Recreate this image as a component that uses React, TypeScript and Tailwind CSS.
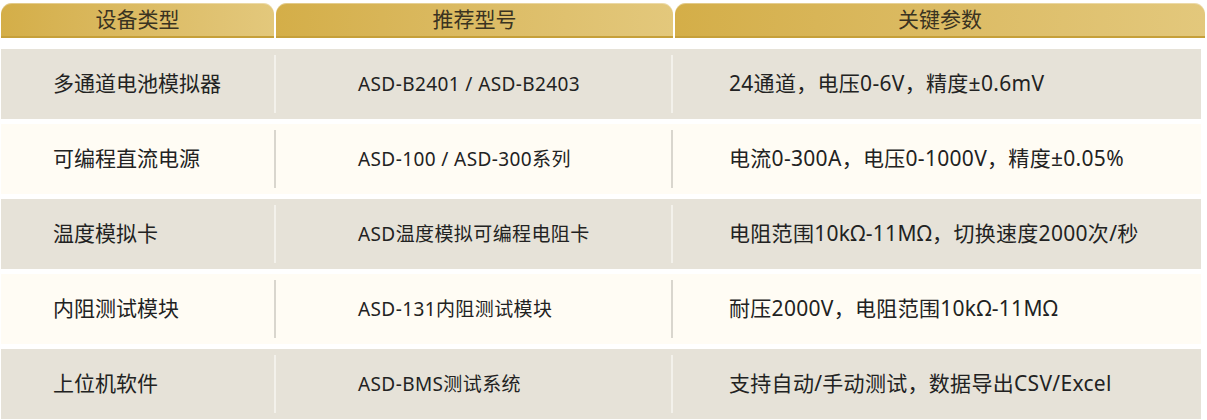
import React from 'react';

interface DeviceRow {
  type: string;
  model: string;
  params: string;
}

const rows: DeviceRow[] = [
  { type: '多通道电池模拟器', model: 'ASD-B2401 / ASD-B2403', params: '24通道，电压0-6V，精度±0.6mV' },
  { type: '可编程直流电源', model: 'ASD-100 / ASD-300系列', params: '电流0-300A，电压0-1000V，精度±0.05%' },
  { type: '温度模拟卡', model: 'ASD温度模拟可编程电阻卡', params: '电阻范围10kΩ-11MΩ，切换速度2000次/秒' },
  { type: '内阻测试模块', model: 'ASD-131内阻测试模块', params: '耐压2000V，电阻范围10kΩ-11MΩ' },
  { type: '上位机软件', model: 'ASD-BMS测试系统', params: '支持自动/手动测试，数据导出CSV/Excel' },
];

const headers = ['设备类型', '推荐型号', '关键参数'];

export default function App() {
  return (
    <div
      className="w-[1207px] h-[420px] bg-white pt-[3px] pl-[1px] overflow-hidden"
      style={{ fontFamily: '"Noto Sans", "Noto Sans CJK SC", sans-serif' }}
    >
      {/* header tabs */}
      <div className="grid grid-cols-[273px_397px_530px] gap-[2px]">
        {headers.map((h) => (
          <div
            key={h}
            className="h-[35px] rounded-t-[11px] bg-gradient-to-r from-[#d4ae48] to-[#e3c87c] border-b-2 border-[#c6a03a] shadow-[inset_0_1px_0_rgba(255,255,255,0.35)] flex items-center justify-center text-[21px] text-[#3a3321] leading-none"
          >
            {h}
          </div>
        ))}
      </div>

      {/* body rows */}
      <div className="mt-[11px] flex flex-col gap-[5px] w-[1200px]">
        {rows.map((r, i) => {
          const odd = i % 2 === 0;
          return (
            <div
              key={r.type}
              className={
                'h-[70px] grid grid-cols-[273px_397px_530px] items-center ' +
                (odd ? 'bg-[#e6e2d8]' : 'bg-[#fffcf4]')
              }
            >
              <div className="h-full flex items-center pl-[52px] text-[21px] text-[#222]">{r.type}</div>
              <div className="h-full flex items-stretch py-[6px]">
                <div className={'w-[2px] ' + (odd ? 'bg-[#f3f1eb]' : 'bg-[#d9d6ce]')} />
                <div className="flex-1 flex items-center pl-[82px] text-[19px] tracking-[0.4px] text-[#222]">
                  {r.model}
                </div>
              </div>
              <div className="h-full flex items-stretch py-[6px]">
                <div className={'w-[2px] ' + (odd ? 'bg-[#f3f1eb]' : 'bg-[#d9d6ce]')} />
                <div className="flex-1 flex items-center pl-[56px] text-[21px] tracking-[0.3px] text-[#222]">
                  {r.params}
                </div>
              </div>
            </div>
          );
        })}
      </div>
    </div>
  );
}
